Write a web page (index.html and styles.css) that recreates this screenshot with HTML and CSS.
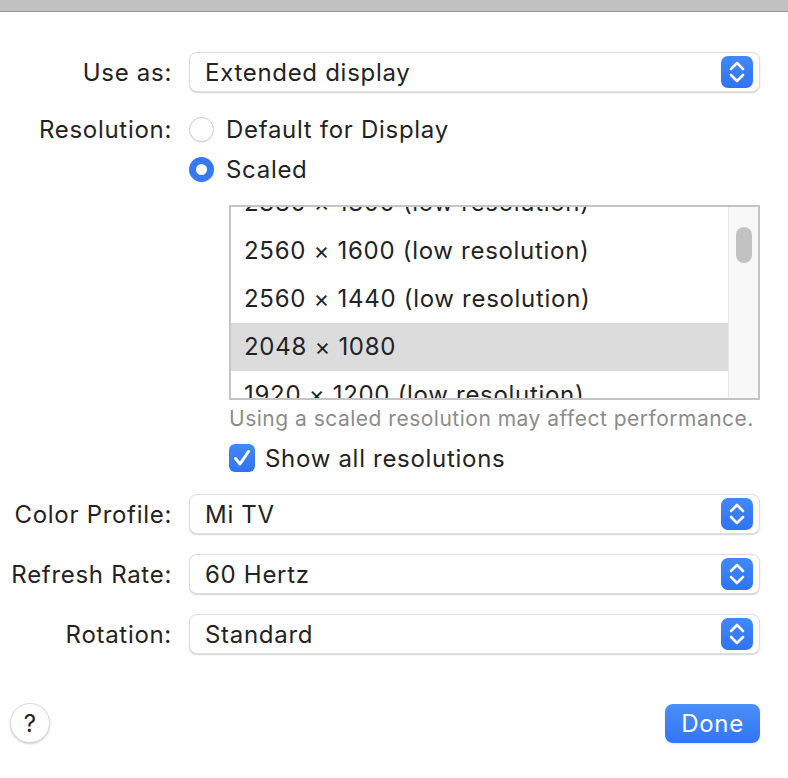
FILE: index.html
```html
<!doctype html>
<html>
<head>
<meta charset="utf-8">
<title>Display settings</title>
<link rel="stylesheet" href="styles.css">
</head>
<body>
<div class="topbar"></div>
<div class="sheet">
  <div class="row row-use">
    <div class="label">Use as:</div>
    <div class="popup">
      <span class="popup-text">Extended display</span>
      <span class="stepper"><svg width="32" height="32" viewBox="0 0 32 32"><path d="M10 13 L16 7 L22 13 M10 19 L16 25 L22 19" fill="none" stroke="#fff" stroke-width="2.6" stroke-linecap="round" stroke-linejoin="round"/></svg></span>
    </div>
  </div>

  <div class="row row-radio">
    <div class="label">Resolution:</div>
    <div class="radio-line"><span class="radio"></span>Default for Display</div>
  </div>
  <div class="row row-radio">
    <div class="label"></div>
    <div class="radio-line"><span class="radio on"></span>Scaled</div>
  </div>

  <div class="row row-list">
    <div class="label"></div>
    <div class="indent">
      <div class="listbox">
        <ul class="reslist">
          <li>2880 × 1800 (low resolution)</li>
          <li>2560 × 1600 (low resolution)</li>
          <li>2560 × 1440 (low resolution)</li>
          <li class="sel">2048 × 1080</li>
          <li class="last">1920 × 1200 (low resolution)</li>
        </ul>
        <div class="scrollbar"><div class="thumb"></div></div>
      </div>
      <div class="caption">Using a scaled resolution may affect performance.</div>
      <div class="check-line">
        <span class="checkbox"><svg width="26" height="28" viewBox="0 0 26 28"><path d="M6.5 14.5 L11 20 L19.5 7.5" fill="none" stroke="#fff" stroke-width="3" stroke-linecap="round" stroke-linejoin="round"/></svg></span>
        Show all resolutions
      </div>
    </div>
  </div>

  <div class="row row-popup first">
    <div class="label">Color Profile:</div>
    <div class="popup">
      <span class="popup-text">Mi TV</span>
      <span class="stepper"><svg width="32" height="32" viewBox="0 0 32 32"><path d="M10 13 L16 7 L22 13 M10 19 L16 25 L22 19" fill="none" stroke="#fff" stroke-width="2.6" stroke-linecap="round" stroke-linejoin="round"/></svg></span>
    </div>
  </div>
  <div class="row row-popup">
    <div class="label">Refresh Rate:</div>
    <div class="popup">
      <span class="popup-text">60 Hertz</span>
      <span class="stepper"><svg width="32" height="32" viewBox="0 0 32 32"><path d="M10 13 L16 7 L22 13 M10 19 L16 25 L22 19" fill="none" stroke="#fff" stroke-width="2.6" stroke-linecap="round" stroke-linejoin="round"/></svg></span>
    </div>
  </div>
  <div class="row row-popup">
    <div class="label">Rotation:</div>
    <div class="popup">
      <span class="popup-text">Standard</span>
      <span class="stepper"><svg width="32" height="32" viewBox="0 0 32 32"><path d="M10 13 L16 7 L22 13 M10 19 L16 25 L22 19" fill="none" stroke="#fff" stroke-width="2.6" stroke-linecap="round" stroke-linejoin="round"/></svg></span>
    </div>
  </div>

  <div class="footer">
    <button class="help">?</button>
    <button class="done">Done</button>
  </div>
</div>
</body>
</html>
```

FILE: styles.css
```css
*{ margin:0; padding:0; box-sizing:border-box; list-style:none;}
body{ font-family:"Inter","Roboto","Liberation Sans",sans-serif; font-size:24px; letter-spacing:0.7px; color:#232323; background:#fff; width:788px; height:778px; overflow:hidden;}

.topbar{ height:12px; background:#c1c1c1; border-bottom:1px solid #9b9b9b;}
.sheet{ padding-top:40px;}

.row{ display:flex; align-items:center; column-gap:17px;}
.label{ width:172px; flex:none; text-align:right; white-space:nowrap;}

.popup{ width:571px; height:40px; border:1px solid #dedede; border-radius:8px; background:#fff; box-shadow:0 1px 1.5px rgba(0,0,0,.18); display:flex; align-items:center; justify-content:space-between; padding:0 6px 0 15px;}
.stepper{ width:32px; height:32px; border-radius:7px; background:linear-gradient(#4189f8,#2f73f4); display:flex;}

.row-radio{ height:40px;}
.row-use + .row-radio{ margin-top:17px;}
.radio-line{ display:flex; align-items:center; gap:12px;}
.radio{ width:25px; height:25px; border-radius:50%; border:1px solid #cfcfcf; background:#fff; box-shadow:0 1px 1px rgba(0,0,0,.08);}
.radio.on{ border:7.5px solid #3479f6; background:#fff;}

.row-list{ align-items:flex-start; margin-top:16px;}
.indent{ padding-left:40px;}
.listbox{ width:531px; height:195px; border:2px solid #c4c4c4; display:flex; overflow:hidden;}
.reslist{ flex:1; margin-top:-28px;}
.reslist li{ height:48px; line-height:48px; padding-left:13px; white-space:nowrap;}
.reslist li.sel{ background:#dcdcdc;}
.reslist li.last{ height:27px; overflow:hidden;}
.scrollbar{ width:30px; flex:none; background:#f8f8f8; border-left:1px solid #e9e9e9; padding:20px 0 0 7px;}
.thumb{ width:16px; height:36px; border-radius:8px; background:#c2c2c2;}

.caption{ margin-top:5px; height:28px; line-height:28px; font-size:21px; letter-spacing:0.5px; color:#8c8c8c; white-space:nowrap;}
.check-line{ margin-top:7px; height:36px; display:flex; align-items:center; gap:10px;}
.checkbox{ width:26px; height:28px; border-radius:6px; background:linear-gradient(#4189f8,#2f73f4); display:flex;}

.row-popup{ margin-top:20px;}
.row-popup.first{ margin-top:18px;}

.footer{ margin-top:49px; display:flex; justify-content:space-between; align-items:center; padding:0 28px 0 10px;}
.help{ width:40px; height:40px; border-radius:50%; border:1px solid #dcdcdc; background:#fff; box-shadow:0 1px 2px rgba(0,0,0,.2); font-family:inherit; font-size:24px; color:#222;}
.done{ width:95px; height:39px; border:none; border-radius:8px; background:linear-gradient(#4b8ff8,#3176f5); color:#fff; font-family:inherit; font-size:24px; letter-spacing:0.7px; box-shadow:0 1px 2px rgba(0,0,0,.12);}
```
